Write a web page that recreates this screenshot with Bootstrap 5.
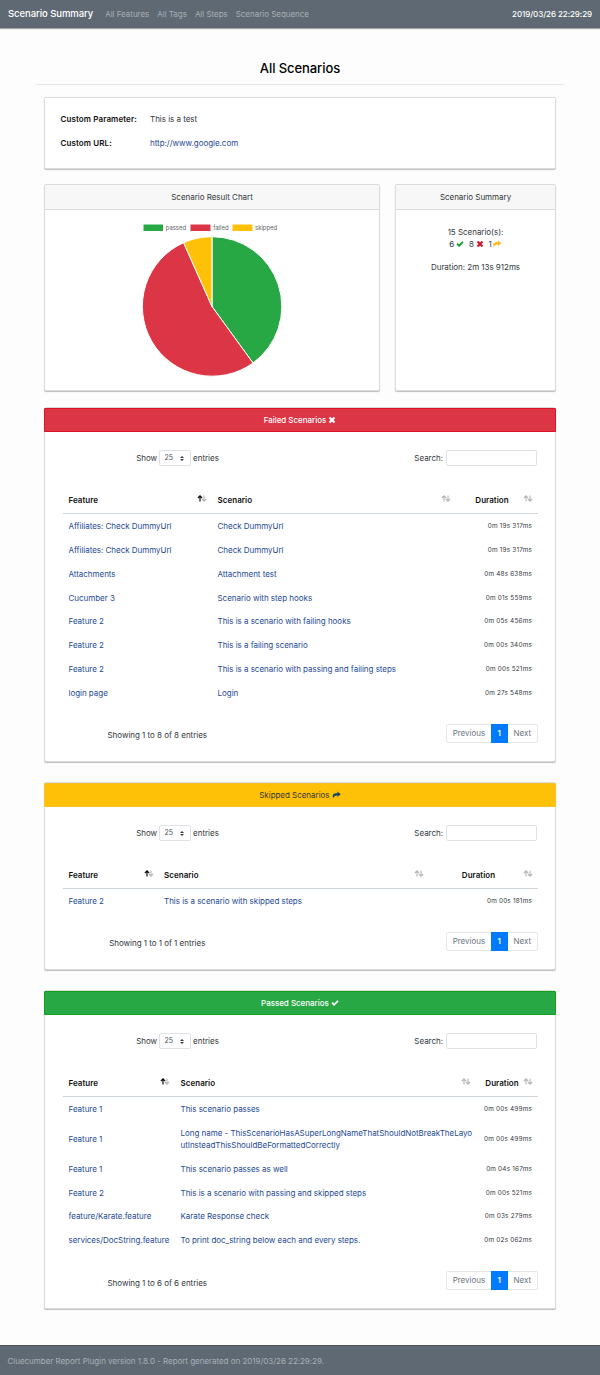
<!DOCTYPE html>
<html lang="en">
<head>
<meta charset="utf-8">
<meta name="viewport" content="width=device-width, initial-scale=1">
<title>Cluecumber Report - All Scenarios</title>
<link href="https://cdn.jsdelivr.net/npm/bootstrap@5.3.0/dist/css/bootstrap.min.css" rel="stylesheet">
<style>
  body { font-family: Inter, "Liberation Sans", sans-serif; font-size: 8px; line-height: 12px; letter-spacing: -.03px; color: #33383d; background: #fdfdfd; height: 1375px; }
  a { color: #254a95; text-decoration: none; }
  .topbar { height: 28px; background: #5e6973; box-shadow: 0 1px 1px rgba(0,0,0,.35); padding: 0 8px; }
  .topbar .navbar-brand { font-size: 9.5px; letter-spacing: -.06px; color: #fff; margin-right: 12px; padding: 0; font-weight: 500; line-height: 14px; }
  .topbar .nav-link { color: #a9afb5; padding: 0; margin-right: 8px; }
  .stamp { color: #fff; font-weight: 500; letter-spacing: -.07px; }
  .page-body { padding: 0 44px; }
  .page-title { font-size: 13px; line-height: 16px; font-weight: 500; letter-spacing: -.08px; color: #000; margin: 0 -8px 12px; padding: 32px 0 8px; border-bottom: 1px solid #e3e7ea; text-align: center; height: 57px; }
  .panel { border: 1px solid #dcdcdc; border-radius: 2px; box-shadow: 0 1px 1px rgba(0,0,0,.25); background: #fff; }
  .panel .card-header { flex-shrink: 0; height: 25px; padding: 0; display: flex; align-items: center; justify-content: center; border-bottom: 1px solid #dcdcdc; background: #f7f7f7; border-radius: 1px 1px 0 0; }
  .params { height: 72px; padding: 15px 15.5px; }
  .params dt { width: 89.5px; font-weight: 600; color: #111; letter-spacing: .11px; }
  .params dl > div { height: 24px; }
  .stats { height: 207px; margin-top: 15px; }
  .w-chart { width: 336px; } .w-sum { width: 161px; }
  .report .card-header { height: 24px; margin: 0 -1px; width: calc(100% + 2px); }
  .report .failed-head { background: #dc3545; border: 1px solid #dc1226; color: #fff; font-weight: 500; }
  .report .skipped-head { background: #ffc107; border: 1px solid #f5c028; }
  .report .passed-head { background: #28a745; border: 1px solid #12a01c; color: #fff; font-weight: 500; }
  .report-body { padding: 18px 17px 0 18px; }
  .tools { height: 16px; margin-bottom: 21px; }
  .half { width: 229px; }
  .tools .form-select { width: 31.5px; height: 16px; min-height: 0; padding: 0 0 0 4.500px; font-size: 7px; line-height: 14px; border: 1px solid #dde2e6; border-radius: 2px; margin: 0 2.500px 0 2px; color: #495057; background-position: right 6px center; background-size: 4px 5px; background-image: url("data:image/svg+xml,%3csvg xmlns='http://www.w3.org/2000/svg' viewBox='0 0 4 5'%3e%3cpath fill='%23343a40' d='M2 0L0 2h4zm0 5L0 3h4z'/%3e%3c/svg%3e"); }
  .tools .form-control { width: 91px; height: 16px; min-height: 0; padding: 0; border: 1px solid #dde2e6; border-radius: 2px; margin: 0 1px 0 3px; }
  .grid-table { table-layout: fixed; margin: 0; color: inherit; --bs-table-bg: transparent; --bs-table-color: #33383d; }
  .grid-table th { height: 26px; padding: 1px 6px 0 5.500px; font-weight: 600; letter-spacing: .04px; color: #111; vertical-align: middle; border-bottom: 1px solid #d0d7dc; }
  .grid-table td { height: 23.87px; padding: 6.500px 6px 5.370px 5.500px; border: 0; vertical-align: middle; white-space: nowrap; }
  .grid-table th:last-child { padding: 1px 16px 0 5px; text-align: center; white-space: nowrap; }
  .grid-table td:last-child { font-size: 6.400px; letter-spacing: .19px; text-align: right; padding-left: 0; }
  .grid-table th > svg { float: right; width: 10px; height: 7px; margin-top: 1px; margin-right: -1px; }
  .grid-table th:nth-child(2) > svg { margin-right: 0; }
  .grid-table th:last-child > svg { margin-right: -11px; margin-left: 0; }
  .foot { margin-top: 19.500px; }
  .foot .entries { width: 188.500px; padding-top: 4px; text-align: center; }
  .pager .page-link { height: 19px; padding: 0 6px; font-size: 8px; line-height: 17px; color: #6c757d; border-color: #e3e7ea; }
  .pager .page-item:first-child .page-link { border-radius: 2px 0 0 2px; padding: 0 5.500px 0 5.800px; }
  .pager .page-item:last-child .page-link { border-radius: 0 2px 2px 0; padding-left: 5.500px; }
  .pager .active .page-link { background: #007bff; border-color: #007bff; color: #fff; font-weight: 600; }
  .glyph { width: 8px; height: 8px; fill: currentColor; vertical-align: -1px; }
  .bottom-bar { height: 30px; background: #5e6973; color: #a9afb5; padding: 0 7.500px; border-top: 1px solid #4b555e; }
</style>
</head>
<body class="d-flex flex-column">
<svg class="d-none">
  <symbol id="times" viewBox="0 0 16 16"><path d="M4.5 1.5 8 5l3.500-3.500 3 3L11 8l3.500 3.500-3 3L8 11l-3.500 3.500-3-3L5 8 1.500 4.500z"/></symbol>
  <symbol id="check" viewBox="0 0 16 16"><path d="M.8 8.500 3.300 6 6.300 9 12.700 2.500 15.200 5 6.300 14z"/></symbol>
  <symbol id="share" viewBox="0 0 18 16"><path d="M11 .8 17.500 6.300 11 12V8.800C6 8.700 3.500 10 3 15 .2 10 .5 4 11 4z"/></symbol>
  <symbol id="sort" viewBox="0 0 10 7"><path d="M3 6.500V1M.9 3 3 .8 5.100 3M7 .5V6M4.900 4 7 6.200 9.100 4" fill="none" stroke="#b5b5b5" stroke-width="1.100"/></symbol>
  <symbol id="sort-up" viewBox="0 0 10 7"><path d="M7 .5V6M4.900 4 7 6.200 9.100 4" fill="none" stroke="#b5b5b5" stroke-width="1.100"/><path d="M3 6.500V1M.9 3 3 .8 5.100 3" fill="none" stroke="#111" stroke-width="1.200"/></symbol>
</svg>

<nav class="topbar d-flex align-items-center flex-shrink-0">
  <a class="navbar-brand" href="#">Scenario Summary</a>
  <a class="nav-link" href="#">All Features</a>
  <a class="nav-link" href="#">All Tags</a>
  <a class="nav-link" href="#">All Steps</a>
  <a class="nav-link" href="#">Scenario Sequence</a>
  <span class="stamp ms-auto">2019/03/26 22:29:29</span>
</nav>

<main class="page-body">
  <h1 class="page-title">All Scenarios</h1>

  <div class="card panel params">
    <dl class="m-0">
      <div class="d-flex"><dt>Custom Parameter:</dt><dd class="m-0">This is a test</dd></div>
      <div class="d-flex"><dt>Custom URL:</dt><dd class="m-0"><a href="#">http://www.google.com</a></dd></div>
    </dl>
  </div>

  <div class="d-flex justify-content-between stats">
    <div class="card panel w-chart">
      <div class="card-header">Scenario Result Chart</div>
      <svg width="334" height="180" viewBox="45 210 334 180" font-size="6" fill="#666">
        <path fill="#28a745" d="M143.500 224.500h19.500v6.500h-19.500z"/><text x="165.700" y="230">passed</text>
        <path fill="#dc3545" d="M190.500 224.500h20v6.500h-20z"/><text x="213.200" y="230">failed</text>
        <path fill="#ffc107" d="M232.500 224.500h20v6.500h-20z"/><text x="255" y="230">skipped</text>
        <g stroke="#fff" stroke-linejoin="round">
          <path fill="#28a745" d="M212 306.500V236.700A69.800 69.800 0 0 1 253 363z"/>
          <path fill="#dc3545" d="M212 306.500 253 363A69.800 69.800 0 1 1 183.600 242.700z"/>
          <path fill="#ffc107" d="M212 306.500 183.600 242.700A69.800 69.800 0 0 1 212 236.700z"/>
        </g>
      </svg>
    </div>
    <div class="card panel w-sum">
      <div class="card-header">Scenario Summary</div>
      <div class="text-center" style="padding-top:16px">
        15 Scenario(s):<br>
        6 <svg class="glyph" style="color:#0d9b2c"><use href="#check"/></svg>&nbsp; 8 <svg class="glyph" style="color:#d9142b"><use href="#times"/></svg>&nbsp; 1<svg class="glyph" style="color:#ffb91a;width:10px"><use href="#share"/></svg>
        <div style="margin-top:11px">Duration: 2m 13s 912ms</div>
      </div>
    </div>
  </div>

  <section class="card panel report" style="height:355px;margin-top:16px">
    <div class="card-header failed-head">Failed Scenarios&nbsp;<svg class="glyph"><use href="#times"/></svg></div>
    <div class="report-body">
      <div class="tools d-flex align-items-center">
        <div class="half d-flex justify-content-center align-items-center">Show <select class="form-select"><option>25</option></select> entries</div>
        <div class="ms-auto d-flex align-items-center">Search: <input class="form-control" type="search"></div>
      </div>
      <table class="table grid-table">
        <colgroup><col style="width:149px"><col style="width:245px"><col></colgroup>
        <thead><tr><th>Feature<svg><use href="#sort-up"/></svg></th><th>Scenario<svg><use href="#sort"/></svg></th><th>Duration<svg><use href="#sort"/></svg></th></tr></thead>
        <tbody>
          <tr><td><a href="#">Affiliates: Check DummyUrl</a></td><td><a href="#">Check DummyUrl</a></td><td>0m 19s 317ms</td></tr>
          <tr><td><a href="#">Affiliates: Check DummyUrl</a></td><td><a href="#">Check DummyUrl</a></td><td>0m 19s 317ms</td></tr>
          <tr><td><a href="#">Attachments</a></td><td><a href="#">Attachment test</a></td><td>0m 48s 638ms</td></tr>
          <tr><td><a href="#">Cucumber 3</a></td><td><a href="#">Scenario with step hooks</a></td><td>0m 01s 559ms</td></tr>
          <tr><td><a href="#">Feature 2</a></td><td><a href="#">This is a scenario with failing hooks</a></td><td>0m 05s 456ms</td></tr>
          <tr><td><a href="#">Feature 2</a></td><td><a href="#">This is a failing scenario</a></td><td>0m 00s 340ms</td></tr>
          <tr><td><a href="#">Feature 2</a></td><td><a href="#">This is a scenario with passing and failing steps</a></td><td>0m 00s 521ms</td></tr>
          <tr><td><a href="#">login page</a></td><td><a href="#">Login</a></td><td>0m 27s 548ms</td></tr>
        </tbody>
      </table>
      <div class="foot d-flex align-items-center justify-content-between">
        <div class="entries">Showing 1 to 8 of 8 entries</div>
        <ul class="pagination pager m-0"><li class="page-item"><a class="page-link" href="#">Previous</a></li><li class="page-item active"><a class="page-link" href="#">1</a></li><li class="page-item"><a class="page-link" href="#">Next</a></li></ul>
      </div>
    </div>
  </section>

  <section class="card panel report" style="height:188px;margin-top:20px">
    <div class="card-header skipped-head">Skipped Scenarios&nbsp;<svg class="glyph" style="color:#184a63;width:9px"><use href="#share"/></svg></div>
    <div class="report-body">
      <div class="tools d-flex align-items-center">
        <div class="half d-flex justify-content-center align-items-center">Show <select class="form-select"><option>25</option></select> entries</div>
        <div class="ms-auto d-flex align-items-center">Search: <input class="form-control" type="search"></div>
      </div>
      <table class="table grid-table">
        <colgroup><col style="width:95.500px"><col style="width:271.500px"><col></colgroup>
        <thead><tr><th>Feature<svg><use href="#sort-up"/></svg></th><th>Scenario<svg><use href="#sort"/></svg></th><th>Duration<svg><use href="#sort"/></svg></th></tr></thead>
        <tbody>
          <tr><td><a href="#">Feature 2</a></td><td><a href="#">This is a scenario with skipped steps</a></td><td>0m 00s 181ms</td></tr>
        </tbody>
      </table>
      <div class="foot d-flex align-items-center justify-content-between">
        <div class="entries">Showing 1 to 1 of 1 entries</div>
        <ul class="pagination pager m-0"><li class="page-item"><a class="page-link" href="#">Previous</a></li><li class="page-item active"><a class="page-link" href="#">1</a></li><li class="page-item"><a class="page-link" href="#">Next</a></li></ul>
      </div>
    </div>
  </section>

  <section class="card panel report" style="height:319px;margin-top:20px">
    <div class="card-header passed-head">Passed Scenarios&nbsp;<svg class="glyph"><use href="#check"/></svg></div>
    <div class="report-body">
      <div class="tools d-flex align-items-center">
        <div class="half d-flex justify-content-center align-items-center">Show <select class="form-select"><option>25</option></select> entries</div>
        <div class="ms-auto d-flex align-items-center">Search: <input class="form-control" type="search"></div>
      </div>
      <table class="table grid-table">
        <colgroup><col style="width:112px"><col style="width:302px"><col></colgroup>
        <thead><tr><th>Feature<svg><use href="#sort-up"/></svg></th><th>Scenario<svg><use href="#sort"/></svg></th><th>Duration<svg><use href="#sort"/></svg></th></tr></thead>
        <tbody>
          <tr><td><a href="#">Feature 1</a></td><td><a href="#">This scenario passes</a></td><td>0m 00s 499ms</td></tr>
          <tr><td><a href="#">Feature 1</a></td><td><a href="#">Long name - ThisScenarioHasASuperLongNameThatShouldNotBreakTheLayo<br>utInsteadThisShouldBeFormattedCorrectly</a></td><td>0m 00s 499ms</td></tr>
          <tr><td><a href="#">Feature 1</a></td><td><a href="#">This scenario passes as well</a></td><td>0m 04s 167ms</td></tr>
          <tr><td><a href="#">Feature 2</a></td><td><a href="#">This is a scenario with passing and skipped steps</a></td><td>0m 00s 521ms</td></tr>
          <tr><td><a href="#">feature/Karate.feature</a></td><td><a href="#">Karate Response check</a></td><td>0m 03s 279ms</td></tr>
          <tr><td><a href="#">services/DocString.feature</a></td><td><a href="#">To print doc_string below each and every steps.</a></td><td>0m 02s 062ms</td></tr>
        </tbody>
      </table>
      <div class="foot d-flex align-items-center justify-content-between">
        <div class="entries">Showing 1 to 6 of 6 entries</div>
        <ul class="pagination pager m-0"><li class="page-item"><a class="page-link" href="#">Previous</a></li><li class="page-item active"><a class="page-link" href="#">1</a></li><li class="page-item"><a class="page-link" href="#">Next</a></li></ul>
      </div>
    </div>
  </section>
</main>

<footer class="bottom-bar d-flex align-items-center mt-auto flex-shrink-0">Cluecumber Report Plugin version 1.8.0 - Report generated on 2019/03/26 22:29:29.</footer>
<script src="https://cdn.jsdelivr.net/npm/bootstrap@5.3.0/dist/js/bootstrap.bundle.min.js"></script>
</body>
</html>
